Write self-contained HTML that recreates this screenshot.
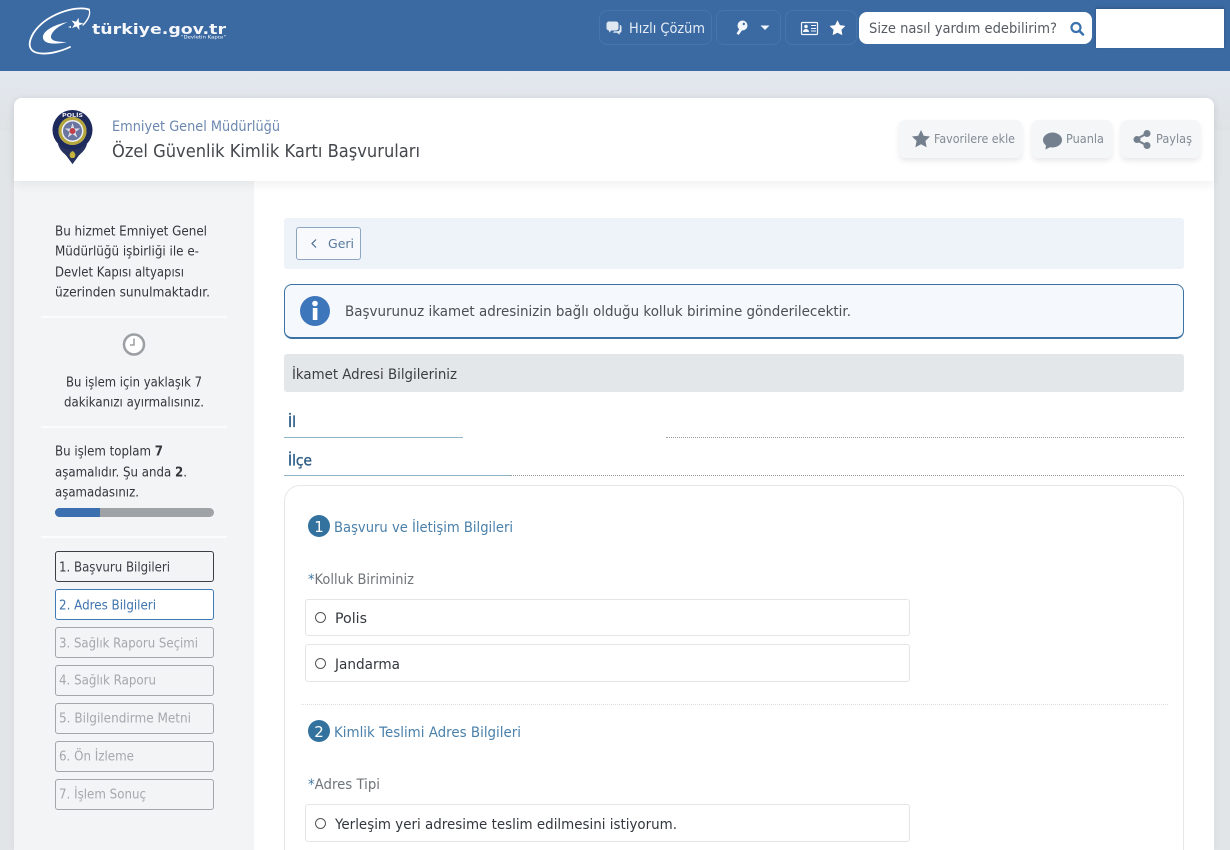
<!DOCTYPE html>
<html lang="tr">
<head>
<meta charset="utf-8">
<title>Özel Güvenlik Kimlik Kartı Başvuruları</title>
<style>
html,body{margin:0;padding:0;width:1230px;height:850px;overflow:hidden;background:#e1e5e8}
#page{position:relative;width:1230px;height:850px;overflow:hidden;background:#e1e5e8}
.b{position:absolute;box-sizing:border-box}
svg{position:absolute;left:0;top:0}
text{font-family:"DejaVu Sans","Liberation Sans",sans-serif;white-space:pre}
</style>
</head>
<body>
<div id="page">
<div class="b" style="left:0;top:71px;width:1230px;height:60px;background:linear-gradient(#e3e8ef,#dfe3e6)"></div>
<div class="b" style="left:0;top:0;width:1230px;height:71px;background:#3b6aa3"></div>
<div class="b" style="left:599px;top:10px;width:113px;height:35px;border:1px solid #4674ad;border-radius:8px"></div>
<div class="b" style="left:716px;top:10px;width:65px;height:35px;border:1px solid #4674ad;border-radius:8px"></div>
<div class="b" style="left:785px;top:10px;width:72px;height:35px;border:1px solid #4674ad;border-radius:8px"></div>
<div class="b" style="left:859px;top:12px;width:233px;height:32px;background:#fff;border-radius:8px"></div>
<div class="b" style="left:1096px;top:9px;width:128px;height:39px;background:#fff;box-shadow:0 -1px 3px rgba(20,40,70,.35)"></div>

<div class="b" style="left:14px;top:98px;width:1200px;height:752px;background:#fff;border-radius:8px 8px 0 0;box-shadow:0 0 8px rgba(0,0,0,.05)"></div>
<div class="b" style="left:14px;top:181px;width:240px;height:669px;background:#f2f4f6"></div>
<div class="b" style="left:14px;top:98px;width:1200px;height:83px;background:#fff;border-radius:8px 8px 0 0;box-shadow:0 4px 10px rgba(0,0,0,.06)"></div>

<div class="b" style="left:899px;top:120px;width:123px;height:38px;background:#f4f6f8;border-radius:6px;box-shadow:0 3px 6px rgba(0,0,0,.09)"></div>
<div class="b" style="left:1032px;top:120px;width:80px;height:38px;background:#f4f6f8;border-radius:6px;box-shadow:0 3px 6px rgba(0,0,0,.09)"></div>
<div class="b" style="left:1121px;top:120px;width:79px;height:38px;background:#f4f6f8;border-radius:6px;box-shadow:0 3px 6px rgba(0,0,0,.09)"></div>

<div class="b" style="left:41px;top:316px;width:186px;height:2px;background:#fbfcfd"></div>
<div class="b" style="left:41px;top:426px;width:186px;height:2px;background:#fbfcfd"></div>
<div class="b" style="left:41px;top:536px;width:186px;height:2px;background:#fbfcfd"></div>
<div class="b" style="left:55px;top:508px;width:159px;height:9px;background:#a0a3a6;border-radius:5px;overflow:hidden"><div style="width:45px;height:9px;background:#3b6fb0"></div></div>

<div class="b" style="left:55px;top:551px;width:159px;height:31px;border:1px solid #3a3f45;border-radius:3px"></div>
<div class="b" style="left:55px;top:589px;width:159px;height:31px;border:1px solid #3f7ab8;border-radius:3px;background:#fff"></div>
<div class="b" style="left:55px;top:627px;width:159px;height:31px;border:1px solid #a3a6aa;border-radius:3px"></div>
<div class="b" style="left:55px;top:665px;width:159px;height:31px;border:1px solid #a3a6aa;border-radius:3px"></div>
<div class="b" style="left:55px;top:703px;width:159px;height:31px;border:1px solid #a3a6aa;border-radius:3px"></div>
<div class="b" style="left:55px;top:741px;width:159px;height:31px;border:1px solid #a3a6aa;border-radius:3px"></div>
<div class="b" style="left:55px;top:779px;width:159px;height:31px;border:1px solid #a3a6aa;border-radius:3px"></div>

<div class="b" style="left:284px;top:218px;width:900px;height:51px;background:#eef3fa;border-radius:3px"></div>
<div class="b" style="left:296px;top:227px;width:65px;height:33px;background:#f7f9fc;border:1px solid #8ea5c0;border-radius:3px"></div>
<div class="b" style="left:284px;top:284px;width:900px;height:55px;background:#f5f8fc;border:1px solid #3c72a3;border-bottom-width:2px;border-radius:8px"></div>
<div class="b" style="left:284px;top:354px;width:900px;height:38px;background:#e4e7ea;border-radius:3px"></div>

<div class="b" style="left:666px;top:437px;width:518px;height:0;border-top:1px dotted #9a9a9a"></div>
<div class="b" style="left:284px;top:437px;width:179px;height:1px;background:#8fb4c9"></div>
<div class="b" style="left:510px;top:475px;width:674px;height:0;border-top:1px dotted #9a9a9a"></div>
<div class="b" style="left:284px;top:475px;width:226px;height:1px;background:#8fb4c9"></div>

<div class="b" style="left:284px;top:485px;width:900px;height:400px;border:1px solid #e5e8eb;border-radius:16px"></div>
<div class="b" style="left:305px;top:599px;width:605px;height:37px;border:1px solid #e3e5e8;border-radius:3px"></div>
<div class="b" style="left:305px;top:644px;width:605px;height:38px;border:1px solid #e3e5e8;border-radius:3px"></div>
<div class="b" style="left:301px;top:704px;width:867px;height:0;border-top:1px dotted #dcdfe2"></div>
<div class="b" style="left:305px;top:804px;width:605px;height:38px;border:1px solid #e3e5e8;border-radius:3px"></div>

<svg width="1230" height="850" viewBox="0 0 1230 850" xmlns="http://www.w3.org/2000/svg">
<!-- logo -->
<g fill="none" stroke="#fff" stroke-linecap="round">
<path d="M89 9.500C76 5 46 14 33.500 33C26 46 30 53 42 53.500C50 54 62 51 70 47" stroke-width="1.800"/>
<path d="M89 9.500C91 14 88 20 83 25" stroke-width="1.300"/>
</g>
<path d="M68 22C52 25 42 32 43 38C44 44 54 45 67 42C58 42 51 41 51 37C51 32 58 26 68 22Z" fill="#fff"/>
<polygon transform="translate(77 24) rotate(14) scale(6.500)" fill="#fff" points="0,-1 .225,-.31 .95,-.31 .36,.12 .59,.81 0,.38 -.59,.81 -.36,.12 -.95,-.31 -.225,-.31"/>
<path d="M71 26l-3 1 3 1z" fill="#fff"/>
<text x="92" y="34" font-size="14" font-weight="700" fill="#fff" fill-opacity=".95" textLength="134" lengthAdjust="spacingAndGlyphs">türkiye.gov.tr</text>
<text x="181" y="38.500" font-size="4" fill="#fff" textLength="45" lengthAdjust="spacingAndGlyphs">"Devletin Kapısı"</text>

<!-- header -->
<path d="M606.500 24a2.500 2.500 0 0 1 2.500-2.500h7a2.500 2.500 0 0 1 2.500 2.500v4a2.500 2.500 0 0 1-2.500 2.500h-4.500l-2.500 2v-2a2.500 2.500 0 0 1-2.500-2.500z" fill="#dfe7f1"/>
<path d="M619.800 25a1.800 1.800 0 0 1 1.700 1.800v4.200a1.800 1.800 0 0 1-1.800 1.800v2l-2.700-2h-4l1-1.500h3.500a2.800 2.800 0 0 0 2.300-2.800z" fill="#dfe7f1"/>
<text x="629" y="33" font-size="14" fill="#e6edf6" textLength="76" lengthAdjust="spacingAndGlyphs">Hızlı Çözüm</text>
<circle cx="742.500" cy="25.500" r="5" fill="#f2f6fb"/>
<circle cx="743.800" cy="24" r="1.200" fill="#3b6aa3"/>
<path d="M740 28l-3.500 5.500 2 1.500 1.300-1.500 .7-1 2.500-3.500z" fill="#f2f6fb"/>
<path d="M760.500 25.500h9l-4.500 4.500z" fill="#f2f6fb"/>
<rect x="801.500" y="22.500" width="16" height="12" rx="1" fill="none" stroke="#f2f6fb" stroke-width="1.200"/>
<circle cx="806" cy="26.500" r="1.800" fill="#f2f6fb"/>
<path d="M803 32c0-4 6-4 6 0z" fill="#f2f6fb"/>
<path d="M811 25.500h5M811 28.500h5M811 31h5" stroke="#f2f6fb" stroke-width="1"/>
<polygon transform="translate(837.500 28.500) scale(7.500)" fill="#fff" stroke="#fff" stroke-width=".1" stroke-linejoin="round" points="0,-1 .29,-.4 .95,-.31 .47,.15 .59,.81 0,.5 -.59,.81 -.47,.15 -.95,-.31 -.29,-.4"/>
<text x="869" y="33" font-size="14.500" fill="#555b62" textLength="188" lengthAdjust="spacingAndGlyphs">Size nasıl yardım edebilirim?</text>
<circle cx="1076" cy="27.500" r="4.500" fill="none" stroke="#3b72ad" stroke-width="2.200"/>
<path d="M1079.500 31l3.500 3.500" stroke="#3b72ad" stroke-width="2.500" stroke-linecap="round"/>

<!-- badge -->
<path d="M60 147L72.500 164L85 147Z" fill="#1f2a55"/>
<path d="M58 144C60 152 66 154 68 158L72.500 164L77 158C79 154 85 152 87 144Z" fill="#28325f"/>
<circle cx="72.500" cy="130" r="20" fill="#1f2a5c"/>
<circle cx="72.500" cy="131" r="14" fill="#eef0f4"/>
<circle cx="72.500" cy="131" r="12.500" fill="none" stroke="#b3a53a" stroke-width="3"/>
<circle cx="72.500" cy="131" r="9.500" fill="#6a76a0"/>
<polygon transform="translate(72.500 131) scale(8)" fill="#dde0ea" points="0,-1 .225,-.31 .95,-.31 .36,.12 .59,.81 0,.38 -.59,.81 -.36,.12 -.95,-.31 -.225,-.31"/>
<circle cx="72.500" cy="131" r="3" fill="#c2404a"/>
<text x="62" y="117" font-size="5" font-weight="700" fill="#e8e8f2" textLength="21" lengthAdjust="spacingAndGlyphs">POLİS</text>
<path d="M72.500 151c-3.500 2-3.500 5-1.500 7h3c2-2 2-5-1.500-7z" fill="#c7b23c"/>

<!-- title -->
<text x="112" y="131" font-size="14" fill="#6b87ae" textLength="168" lengthAdjust="spacingAndGlyphs">Emniyet Genel Müdürlüğü</text>
<text x="112" y="157" font-size="18" fill="#44474c" textLength="308" lengthAdjust="spacingAndGlyphs">Özel Güvenlik Kimlik Kartı Başvuruları</text>

<!-- actions -->
<polygon transform="translate(921 139.500) scale(9.500)" fill="#75808e" points="0,-1 .29,-.4 .95,-.31 .47,.15 .59,.81 0,.5 -.59,.81 -.47,.15 -.95,-.31 -.29,-.4"/>
<text x="934" y="143" font-size="12" fill="#838b95" textLength="81" lengthAdjust="spacingAndGlyphs">Favorilere ekle</text>
<ellipse cx="1052.500" cy="140" rx="9.500" ry="7.500" fill="#75808e"/>
<path d="M1046 145l-.5 4.500 6-3z" fill="#75808e"/>
<text x="1066" y="143" font-size="12" fill="#838b95" textLength="38" lengthAdjust="spacingAndGlyphs">Puanla</text>
<path d="M1147 133.500l-11.500 6 11.500 6" fill="none" stroke="#75808e" stroke-width="2"/>
<circle cx="1147" cy="133.500" r="3.500" fill="#75808e"/>
<circle cx="1137" cy="139.500" r="3.500" fill="#75808e"/>
<circle cx="1147" cy="145.500" r="3.500" fill="#75808e"/>
<text x="1156" y="143" font-size="12" fill="#838b95" textLength="36" lengthAdjust="spacingAndGlyphs">Paylaş</text>

<!-- sidebar -->
<g font-size="13.200" fill="#33373c">
<text x="55" y="235.500" textLength="152" lengthAdjust="spacingAndGlyphs">Bu hizmet Emniyet Genel</text>
<text x="55" y="255.500" textLength="144" lengthAdjust="spacingAndGlyphs">Müdürlüğü işbirliği ile e-</text>
<text x="55" y="276.500" textLength="129" lengthAdjust="spacingAndGlyphs">Devlet Kapısı altyapısı</text>
<text x="55" y="296.500" textLength="155" lengthAdjust="spacingAndGlyphs">üzerinden sunulmaktadır.</text>
<text x="66" y="386.500" textLength="136" lengthAdjust="spacingAndGlyphs">Bu işlem için yaklaşık 7</text>
<text x="64" y="406.500" textLength="140" lengthAdjust="spacingAndGlyphs">dakikanızı ayırmalısınız.</text>
<text x="55" y="455.500" textLength="108" lengthAdjust="spacingAndGlyphs">Bu işlem toplam <tspan font-weight="700">7</tspan></text>
<text x="55" y="476.500" textLength="132" lengthAdjust="spacingAndGlyphs">aşamalıdır. Şu anda <tspan font-weight="700">2</tspan>.</text>
<text x="55" y="496.500" textLength="84" lengthAdjust="spacingAndGlyphs">aşamadasınız.</text>
</g>
<circle cx="134" cy="344.500" r="10" fill="#fff" stroke="#9b9fa3" stroke-width="2.500"/>
<path d="M134 338.500v6.500h-4" fill="none" stroke="#9b9fa3" stroke-width="1.500"/>

<g font-size="13.200">
<text x="59" y="571.500" fill="#3a3f45" textLength="111" lengthAdjust="spacingAndGlyphs">1. Başvuru Bilgileri</text>
<text x="59" y="609.500" fill="#3f74ad" textLength="97" lengthAdjust="spacingAndGlyphs">2. Adres Bilgileri</text>
<g fill="#a5a8ac">
<text x="59" y="647.500" textLength="139" lengthAdjust="spacingAndGlyphs">3. Sağlık Raporu Seçimi</text>
<text x="59" y="684.500" textLength="97" lengthAdjust="spacingAndGlyphs">4. Sağlık Raporu</text>
<text x="59" y="722.500" textLength="132" lengthAdjust="spacingAndGlyphs">5. Bilgilendirme Metni</text>
<text x="59" y="760.500" textLength="75" lengthAdjust="spacingAndGlyphs">6. Ön İzleme</text>
<text x="59" y="798.500" textLength="87" lengthAdjust="spacingAndGlyphs">7. İşlem Sonuç</text>
</g>
</g>

<!-- geri -->
<path d="M316 239.500l-4 4 4 4" fill="none" stroke="#4a6a8f" stroke-width="1.200"/>
<text x="328" y="248" font-size="12.800" fill="#5a7aa0" textLength="26" lengthAdjust="spacingAndGlyphs">Geri</text>

<!-- alert -->
<circle cx="315" cy="311" r="15" fill="#3e76bb"/>
<rect x="312.800" y="308" width="4.600" height="12" fill="#fff"/>
<circle cx="315" cy="303.500" r="2.800" fill="#fff"/>
<text x="345" y="316" font-size="14.500" fill="#4b5056" textLength="506" lengthAdjust="spacingAndGlyphs">Başvurunuz ikamet adresinizin bağlı olduğu kolluk birimine gönderilecektir.</text>

<text x="292" y="379" font-size="14.500" fill="#3a3d42" textLength="165" lengthAdjust="spacingAndGlyphs">İkamet Adresi Bilgileriniz</text>
<text x="288" y="427" font-size="15" fill="#2e5d85" stroke="#2e5d85" stroke-width=".35" textLength="8" lengthAdjust="spacingAndGlyphs">İl</text>
<text x="288" y="465.500" font-size="15" fill="#2e5d85" stroke="#2e5d85" stroke-width=".35" textLength="24" lengthAdjust="spacingAndGlyphs">İlçe</text>

<!-- section 1 -->
<circle cx="319" cy="526" r="11" fill="#33729f"/>
<text x="319" y="532" font-size="15" fill="#fff" text-anchor="middle">1</text>
<text x="334" y="532" font-size="14.500" fill="#4a80aa" textLength="179" lengthAdjust="spacingAndGlyphs">Başvuru ve İletişim Bilgileri</text>
<text x="308" y="584" font-size="14" fill="#6f7479" textLength="106" lengthAdjust="spacingAndGlyphs"><tspan fill="#3f78a5">*</tspan>Kolluk Biriminiz</text>
<circle cx="320.500" cy="617.500" r="5" fill="#fff" stroke="#555" stroke-width="1"/>
<text x="335" y="623" font-size="14.500" fill="#33373c" textLength="32" lengthAdjust="spacingAndGlyphs">Polis</text>
<circle cx="320.500" cy="663.500" r="5" fill="#fff" stroke="#555" stroke-width="1"/>
<text x="335" y="669" font-size="14.500" fill="#33373c" textLength="65" lengthAdjust="spacingAndGlyphs">Jandarma</text>

<!-- section 2 -->
<circle cx="319" cy="731" r="11" fill="#33729f"/>
<text x="319" y="737" font-size="15" fill="#fff" text-anchor="middle">2</text>
<text x="334" y="737" font-size="14.500" fill="#4a80aa" textLength="187" lengthAdjust="spacingAndGlyphs">Kimlik Teslimi Adres Bilgileri</text>
<text x="308" y="789" font-size="14" fill="#6f7479" textLength="72" lengthAdjust="spacingAndGlyphs"><tspan fill="#3f78a5">*</tspan>Adres Tipi</text>
<circle cx="320.500" cy="823.500" r="5" fill="#fff" stroke="#555" stroke-width="1"/>
<text x="335" y="829" font-size="14.500" fill="#33373c" textLength="342" lengthAdjust="spacingAndGlyphs">Yerleşim yeri adresime teslim edilmesini istiyorum.</text>
</svg>
</div>
</body>
</html>
